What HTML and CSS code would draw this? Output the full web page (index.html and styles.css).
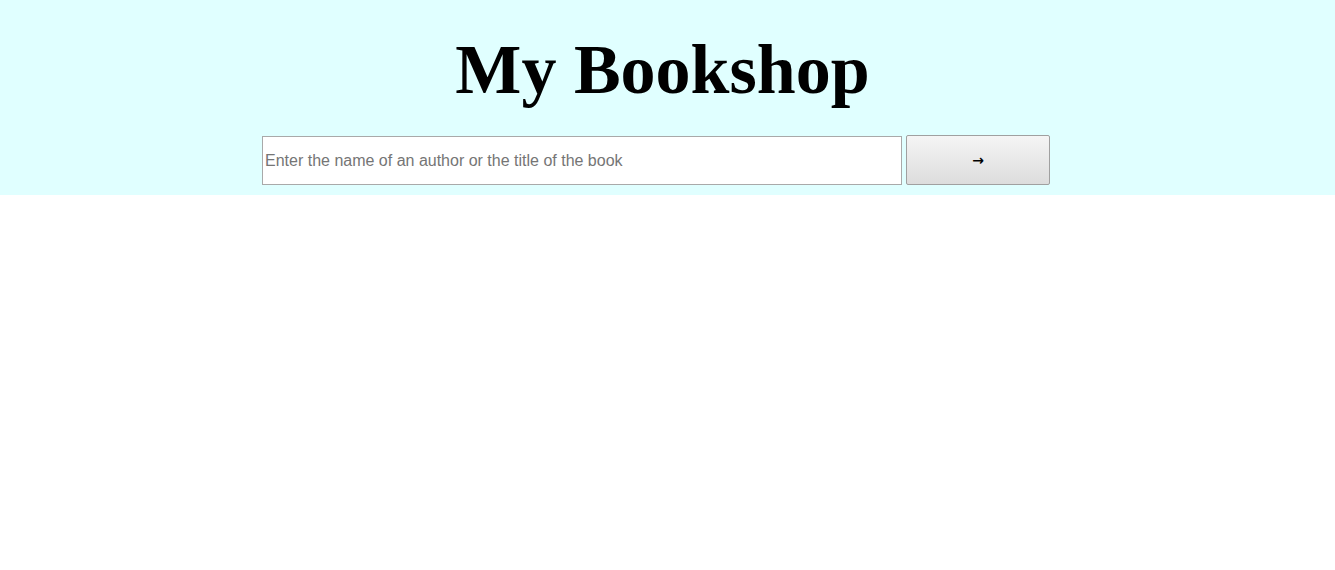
FILE: index.html
```html
<!DOCTYPE html>
<html>
<head>
<meta charset="utf-8">
<title>My Bookshop</title>
<link rel="stylesheet" href="styles.css">
</head>
<body>
<header class="header">
  <h1 class="title">My Bookshop</h1>
  <form class="search">
    <input class="search-input" type="text" placeholder="Enter the name of an author or the title of the book">
    <button class="search-button" type="button">→</button>
  </form>
</header>
</body>
</html>
```
FILE: styles.css
```css
html, body {
  margin: 0;
  padding: 0;
  background: #ffffff;
}
.header {
  background: #e0ffff;
  padding: 26px 0 10px;
  display: flex;
  flex-direction: column;
  align-items: center;
}
.title {
  margin: 0 0 21px;
  padding-right: 10px;
  font-family: "Liberation Serif", "Times New Roman", serif;
  font-weight: bold;
  font-size: 70px;
  line-height: 88px;
  color: #000;
  text-align: center;
}
.search {
  display: flex;
  align-items: flex-end;
  gap: 4px;
  padding-right: 23px;
}
.search-input {
  box-sizing: border-box;
  width: 640px;
  height: 49px;
  margin: 0;
  padding: 0 2px;
  border: 1px solid #a9a9a9;
  background: #fff;
  font-family: "Liberation Sans", Arial, sans-serif;
  font-size: 16px;
  color: #000;
  outline: none;
}
.search-input::placeholder {
  color: #757575;
}
.search-button {
  box-sizing: border-box;
  width: 144px;
  height: 50px;
  margin: 0;
  padding: 0;
  border: 1px solid #a0a0a0;
  border-radius: 2px;
  background: linear-gradient(#f5f5f5, #dddddd);
  font-family: "DejaVu Sans", sans-serif;
  font-size: 14px;
  font-weight: bold;
  color: #000;
}
```
